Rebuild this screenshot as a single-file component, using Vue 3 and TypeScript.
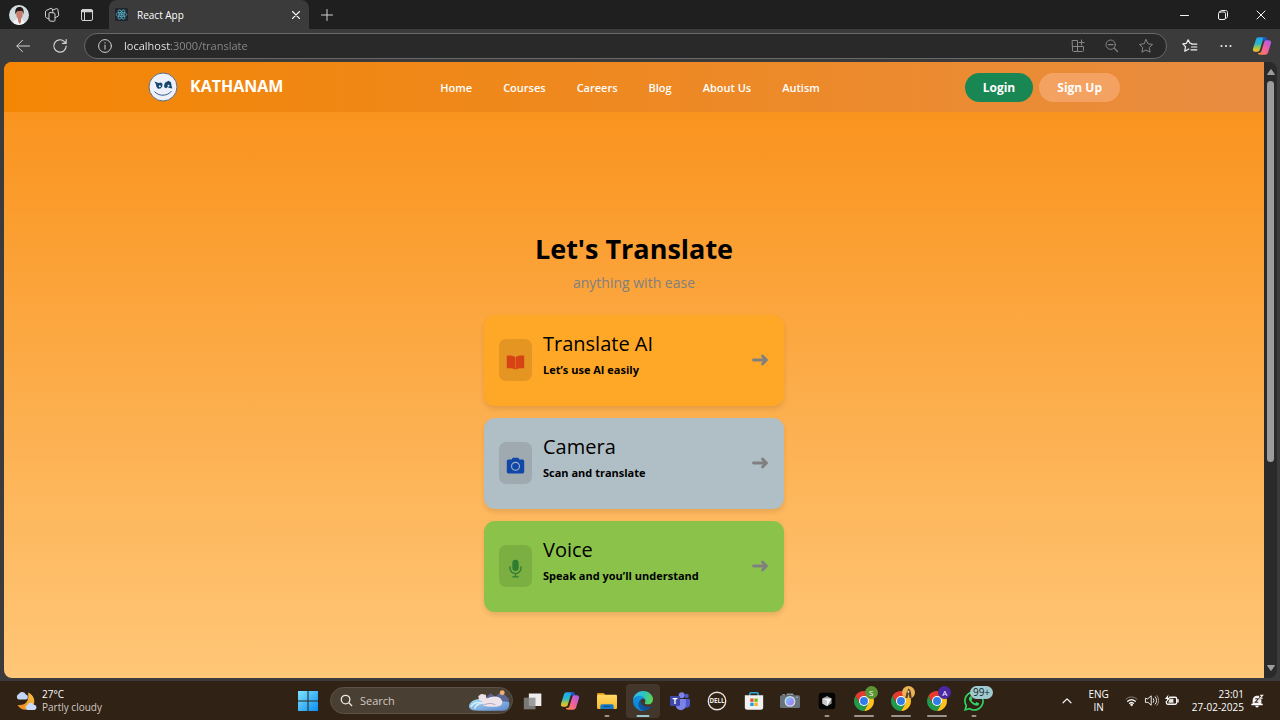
<script setup lang="ts">
import { ref } from 'vue'

interface TranslateOption {
  id: 'ai' | 'camera' | 'voice'
  title: string
  text: string
}

interface TaskApp {
  name: string
  icon: string
  state?: 'open' | 'active' | 'wide'
  badge?: string
  badgeKind?: string
}

const address = ref('localhost:3000/translate')
const taskSearch = ref('')

const links: string[] = ['Home', 'Courses', 'Careers', 'Blog', 'About Us', 'Autism']

const options: TranslateOption[] = [
  { id: 'ai', title: 'Translate AI', text: 'Let’s use AI easily' },
  { id: 'camera', title: 'Camera', text: 'Scan and translate' },
  { id: 'voice', title: 'Voice', text: 'Speak and you’ll understand' },
]

const apps: TaskApp[] = [
  { name: 'Task view', icon: 'taskview' },
  { name: 'Copilot', icon: 'copilot' },
  { name: 'File Explorer', icon: 'explorer', state: 'open' },
  { name: 'Edge', icon: 'edge', state: 'active' },
  { name: 'Teams', icon: 'teams' },
  { name: 'Dell', icon: 'dell' },
  { name: 'Store', icon: 'store' },
  { name: 'Camera', icon: 'photo' },
  { name: 'Cursor', icon: 'cube', state: 'open' },
  { name: 'Chrome S', icon: 'chrome', state: 'wide', badge: 'S', badgeKind: 'green' },
  { name: 'Chrome guest', icon: 'chrome', state: 'wide', badge: '', badgeKind: 'photo' },
  { name: 'Chrome A', icon: 'chrome', state: 'wide', badge: 'A', badgeKind: 'purple' },
  { name: 'WhatsApp', icon: 'whatsapp', state: 'open', badge: '99+', badgeKind: 'count' },
]
</script>

<template>
  <div class="desktop">
    <svg class="defs" width="0" height="0" aria-hidden="true">
      <defs>
        <linearGradient id="cpLeft" x1="0" y1="0" x2="0" y2="1">
          <stop offset="0" stop-color="#1fa5ee" /><stop offset=".45" stop-color="#2bb8c8" />
          <stop offset=".75" stop-color="#b5c73c" /><stop offset="1" stop-color="#f8b830" />
        </linearGradient>
        <linearGradient id="cpRight" x1="1" y1="0" x2="0" y2="1">
          <stop offset="0" stop-color="#a05cf5" /><stop offset=".5" stop-color="#f0609c" />
          <stop offset="1" stop-color="#ff8a3c" />
        </linearGradient>
        <linearGradient id="edgeA" x1=".2" y1="0" x2="1" y2="0">
          <stop offset="0" stop-color="#0c59a4" /><stop offset="1" stop-color="#114a8b" />
        </linearGradient>
        <linearGradient id="edgeB" x1="1" y1="0" x2="0" y2="1">
          <stop offset="0" stop-color="#1b9de2" /><stop offset="1" stop-color="#0680d7" />
        </linearGradient>
        <linearGradient id="edgeC" x1="0" y1=".4" x2="1" y2=".6">
          <stop offset="0" stop-color="#35c1f1" /><stop offset=".45" stop-color="#2cc2c8" />
          <stop offset="1" stop-color="#5fd84a" />
        </linearGradient>
        <linearGradient id="winBlue" x1="0" y1="0" x2="1" y2="1">
          <stop offset="0" stop-color="#7fe4ff" /><stop offset="1" stop-color="#0a8cf0" />
        </linearGradient>
        <linearGradient id="folder" x1="0" y1="0" x2="0" y2="1">
          <stop offset="0" stop-color="#ffd965" /><stop offset="1" stop-color="#f8b92c" />
        </linearGradient>
        <linearGradient id="lens" x1="0" y1="0" x2="1" y2="1">
          <stop offset="0" stop-color="#6fd0ff" /><stop offset="1" stop-color="#b06cf0" />
        </linearGradient>
        <linearGradient id="moon" x1="1" y1="0" x2="0" y2="1">
          <stop offset="0" stop-color="#fbc541" /><stop offset="1" stop-color="#ee8420" />
        </linearGradient>
        <linearGradient id="ice" x1="0" y1="0" x2="1" y2="1">
          <stop offset="0" stop-color="#a9dff5" /><stop offset="1" stop-color="#5d86cf" />
        </linearGradient>
      </defs>
      <symbol id="i-copilot" viewBox="0 0 24 24">
        <path d="M17 3.5c-.4-1.300-1.200-2-2.500-2H8c-1.700 0-2.800 1-3.400 2.900L1.300 15c-.7 2.400.3 4 2.500 4h2.700c1.500 0 2.400-.8 2.900-2.400l3.100-10.400c.5-1.800 1.200-2.700 2.700-2.700z" fill="url(#cpLeft)" />
        <path d="M12.500 1.500h3c1.200 0 1.900.6 2.300 1.900l.8 2.900h-2.500c-1.300 0-2.200-.3-2.600-1.700z" fill="#2252c8" />
        <path d="M7 20.500c.4 1.300 1.200 2 2.500 2H16c1.700 0 2.800-1 3.400-2.900L22.700 9c.7-2.400-.3-4-2.500-4h-2.700c-1.500 0-2.400.8-2.900 2.400l-3.100 10.400c-.5 1.800-1.200 2.700-2.700 2.700z" fill="url(#cpRight)" />
      </symbol>
      <symbol id="i-taskview" viewBox="0 0 24 24">
        <path d="M7 3h15v15H7z" fill="#eeeeee" />
        <path d="M1 8h14v14H1z" fill="#8c8c8c" opacity=".82" />
      </symbol>
      <symbol id="i-explorer" viewBox="0 0 24 24">
        <path d="M0 4A1.500 1.500 0 0 1 1.500 2.500h6.500L10.500 5H0z" fill="#e29a1a" />
        <rect x="0" y="4.500" width="24" height="17" rx="1.500" fill="url(#folder)" />
        <path d="M4 21.500V18a2 2 0 0 1 2-2h12a2 2 0 0 1 2 2v3.500z" fill="#1779c5" />
        <path d="M8 18.500h8" stroke="#0b4f91" stroke-width="1.500" />
      </symbol>
      <symbol id="i-edge" viewBox="0 0 256 256">
        <path fill="url(#edgeA)" d="M231 190.500c-3.400 1.800-6.900 3.400-10.500 4.700a101.900 101.900 0 0 1-35.900 6.400c-47.300 0-88.500-32.500-88.500-74.300 0-11.500 6.400-21.900 16.400-27.300-42.800 1.800-53.800 46.400-53.800 72.500 0 73.900 68.100 81.400 82.800 81.400 7.900 0 19.800-2.300 27-4.600l1.300-.4a128.300 128.300 0 0 0 66.600-52.800 4 4 0 0 0-5.400-5.600z" />
        <path fill="url(#edgeB)" d="M105.700 241.400a79.200 79.200 0 0 1-22.700-21.300 80.700 80.700 0 0 1 29.500-120c3.100-1.500 8.500-4.100 15.600-4a32.400 32.400 0 0 1 25.700 13 31.900 31.900 0 0 1 6.300 18.700c0-.2 24.500-79.600-80-79.600C36.300 48.200 0 90 0 126.600a130.500 130.500 0 0 0 12.100 56 128 128 0 0 0 156.400 67.100 75.600 75.600 0 0 1-62.800-8z" />
        <path fill="url(#edgeC)" d="M152.300 148.900c-.8 1-3.300 2.500-3.300 5.700 0 2.600 1.700 5.100 4.700 7.200 14.400 10 41.500 8.700 41.600 8.700a59.600 59.600 0 0 0 30.300-8.400 61.400 61.400 0 0 0 30.400-52.900c.3-22.400-8-37.300-11.300-43.900C223.500 23.900 177.700 0 128 0 57.900 0 1 56.200 0 126.200c.5-36.500 36.800-66 80-66 3.500 0 23.500.3 42 10a72.600 72.600 0 0 1 30.900 29.300c6.100 10.600 7.200 24.100 7.200 29.500s-2.700 13.300-7.800 19.900z" />
      </symbol>
      <symbol id="i-store" viewBox="0 0 24 24">
        <path d="M7 6V3.200C7 2.500 7.500 2 8.200 2h7.600c.7 0 1.200.5 1.200 1.200V6" fill="none" stroke="#2fa9dc" stroke-width="1.800" />
        <path d="M1 5h22v14.500a3 3 0 0 1-3 3H4a3 3 0 0 1-3-3z" fill="#f1f1f1" />
        <path d="M7.500 9h4v4h-4z" fill="#e8502c" /><path d="M12.500 9h4v4h-4z" fill="#74b816" />
        <path d="M7.500 14h4v4h-4z" fill="#1c9be6" /><path d="M12.500 14h4v4h-4z" fill="#f6b61c" />
      </symbol>
      <symbol id="i-photo" viewBox="0 0 24 24">
        <path d="M7 5l1.500-2h7L17 5z" fill="#8e979e" />
        <rect x="0" y="5" width="24" height="15.500" rx="1.800" fill="#69737b" />
        <path d="M3 4.500h3M19 7.500h2.500" stroke="#aeb8be" stroke-width="1.300" />
        <circle cx="12" cy="12.500" r="6.500" fill="#d4dce2" />
        <circle cx="12" cy="12.500" r="5" fill="url(#lens)" />
      </symbol>
      <symbol id="i-cube" viewBox="0 0 24 24">
        <rect x="2" y="2" width="20" height="20" rx="4" fill="#050505" />
        <path d="M12 6l5.500 3v6L12 18.200 6.500 15V9z" fill="#9b9b9b" />
        <path d="M6.500 9H17.500L12 18.200V12z" fill="#f4f4f4" />
        <path d="M6.500 9L12 12v6.200L6.500 15z" fill="#c9c9c9" />
      </symbol>
      <symbol id="i-chrome" viewBox="2 2 44 44">
        <path fill="#e33b2e" d="M4.950 13A22 22 0 0 1 43.050 13H24L14.500 29.500z" />
        <path fill="#fcc31e" d="M43.050 13A22 22 0 0 1 24 46L33.500 29.500 24 13z" />
        <path fill="#229a4b" d="M24 46A22 22 0 0 1 4.950 13L14.500 29.500H33.500z" />
        <circle cx="24" cy="24" r="11" fill="#fff" /><circle cx="24" cy="24" r="8.700" fill="#2f7de9" />
      </symbol>
      <symbol id="i-whatsapp" viewBox="0 0 16 16">
        <path fill="#2fd565" d="M13.601 2.326A7.850 7.850 0 0 0 7.994 0C3.627 0 .068 3.558.064 7.926c0 1.399.366 2.760 1.057 3.965L0 16l4.204-1.102a7.900 7.900 0 0 0 3.790.965h.004c4.368 0 7.926-3.558 7.930-7.930A7.900 7.900 0 0 0 13.600 2.326zM7.994 14.521a6.600 6.600 0 0 1-3.356-.920l-.240-.144-2.494.654.666-2.433-.156-.251a6.560 6.560 0 0 1-1.007-3.505c0-3.626 2.957-6.584 6.591-6.584a6.560 6.560 0 0 1 4.660 1.931 6.560 6.560 0 0 1 1.928 4.660c-.004 3.639-2.961 6.592-6.592 6.592m3.615-4.934c-.197-.099-1.170-.578-1.353-.646-.182-.065-.315-.099-.445.099-.133.197-.513.646-.627.775-.114.133-.232.148-.430.050-.197-.100-.836-.308-1.592-.985-.590-.525-.985-1.175-1.103-1.372-.114-.198-.011-.304.088-.403.087-.088.197-.232.296-.346.100-.114.133-.198.198-.330.065-.134.034-.248-.015-.347-.050-.099-.445-1.076-.612-1.470-.160-.389-.323-.335-.445-.340-.114-.007-.247-.007-.380-.007a.730.730 0 0 0-.529.247c-.182.198-.691.677-.691 1.654s.710 1.916.810 2.049c.098.133 1.394 2.132 3.383 2.992.470.205.840.326 1.129.418.475.152.904.129 1.246.080.380-.058 1.171-.480 1.338-.943.164-.464.164-.860.114-.994-.050-.133-.182-.198-.380-.297" />
      </symbol>
    </svg>

    <div class="titlebar">
      <button class="icon-btn avatar" aria-label="Profile">
        <svg viewBox="0 0 20 20"><defs><clipPath id="av"><circle cx="10" cy="10" r="10" /></clipPath></defs>
          <g clip-path="url(#av)"><path d="M0 0h20v20H0z" fill="#d3dde0" /><path d="M4 20c0-4 2-5.500 6-6 4 .5 6 2 6 6z" fill="#f2f3f5" /><path d="M9 13h3v4l-1.500 2L9 16z" fill="#c67a69" /><ellipse cx="10.500" cy="9" rx="3.300" ry="4.800" fill="#c97d6c" /><path d="M6.500 9.500c-1-5 .7-7.500 4-7.500s5 2.500 3.800 7.500c-.3-2.500-.9-3.500-2-3.800-1.700.4-3.200.2-4.200.5-.7.700-1.200 1.900-1.600 3.300z" fill="#25191b" /></g>
        </svg>
      </button>
      <button class="icon-btn workspaces" aria-label="Workspaces">
        <svg viewBox="0 0 16 16" class="line"><path d="M8.200 3.200l4.300-1.600c.6-.2 1.100.1 1.300.6l.9 5.800c.1.600-.2 1-.7 1.200l-2.800 1.500M6 5.500L10 6c.6.100 1 .5 1 1v6.300c0 .6-.5 1-1 1L6 14c-.6-.1-1-.5-1-1V6.500c0-.6.400-1 1-1zM4.800 12l-2.500-1.300c-.5-.2-.8-.5-.8-1V4.500c0-.5.300-.8.700-1L7 1.300c.6-.2 1 .1 1.200.6L9 5.500" /></svg>
      </button>
      <button class="icon-btn tabs-menu" aria-label="Tab actions">
        <svg viewBox="0 0 16 16" class="line"><rect x="2.500" y="2.500" width="11" height="11" rx="1.500" /><path d="M3 4h10" stroke-width="2.400" /><path d="M5.500 5v8.500" /></svg>
      </button>
      <div class="tab">
        <svg class="react" viewBox="0 0 16 16"><rect width="16" height="16" rx="1.500" fill="#20262c" /><g fill="none" stroke="#5bb9d3" stroke-width=".9"><ellipse cx="8" cy="8" rx="6.500" ry="2.500" /><ellipse cx="8" cy="8" rx="6.500" ry="2.500" transform="rotate(60 8 8)" /><ellipse cx="8" cy="8" rx="6.500" ry="2.500" transform="rotate(120 8 8)" /></g><circle cx="8" cy="8" r="1.400" fill="#5bb9d3" /></svg>
        <span class="tab-title">React App</span>
        <button class="icon-btn tab-close" aria-label="Close tab"><svg viewBox="0 0 16 16" class="line bright"><path d="M4 4l8 8M12 4l-8 8" stroke-width="1.300" /></svg></button>
      </div>
      <button class="icon-btn new-tab" aria-label="New tab"><svg viewBox="0 0 16 16" class="line"><path d="M8 2.500v11M2.500 8h11" /></svg></button>
      <div class="window-controls">
        <button class="icon-btn" aria-label="Minimize"><svg viewBox="0 0 16 16" class="line bright"><path d="M3.500 8.500h8" /></svg></button>
        <button class="icon-btn" aria-label="Restore"><svg viewBox="0 0 16 16" class="line bright"><rect x="3.500" y="5" width="7" height="7.500" rx="1.500" /><path d="M5 4.500c.2-.7.700-1 1.500-1h4c1.300 0 2 .8 2 2V9.500c0 .8-.3 1.300-1 1.500" /></svg></button>
        <button class="icon-btn" aria-label="Close window"><svg viewBox="0 0 16 16" class="line bright"><path d="M4 4l8 8M12 4l-8 8" /></svg></button>
      </div>
    </div>

    <div class="toolbar">
      <button class="icon-btn" aria-label="Back"><svg viewBox="0 0 16 16" class="line"><path d="M14.500 8H2M7.500 2.300L1.800 8l5.700 5.700" /></svg></button>
      <button class="icon-btn reload" aria-label="Reload"><svg viewBox="0 0 16 16" class="line"><path d="M14.200 8a6.200 6.200 0 1 1-1.800-4.400L14 5.200M14.200 1.500v3.800h-3.800" stroke-width="1.200" /></svg></button>
      <div class="address">
        <button class="icon-btn info" aria-label="Site information"><svg viewBox="0 0 16 16" class="line"><circle cx="8" cy="8" r="6.400" /><path d="M8 7v4.200M8 4.600v.4" /></svg></button>
        <input v-model="address" class="url" type="text" aria-label="Address" spellcheck="false" />
        <button class="icon-btn dim" aria-label="Apps"><svg viewBox="0 0 16 16" class="line"><path d="M2.500 2.500h5v11H3.500a1 1 0 0 1-1-1zM2.500 8.500h11v4a1 1 0 0 1-1 1h-5M11.500 2v5M9 4.500h5" /></svg></button>
        <button class="icon-btn dim" aria-label="Zoom"><svg viewBox="0 0 16 16" class="line"><circle cx="6.700" cy="6.700" r="4.700" /><path d="M10.200 10.200L13.500 13.500M4.500 6.700H9" stroke-width="1.200" /></svg></button>
        <button class="icon-btn dim" aria-label="Add to favorites"><svg viewBox="0 0 16 16" class="line"><path d="M8 1.600l2 4.200 4.600.6-3.400 3.200.9 4.600L8 12l-4.100 2.200.9-4.600L1.400 6.400 6 5.800z" /></svg></button>
      </div>
      <button class="icon-btn" aria-label="Favorites"><svg viewBox="0 0 16 16" class="line bright"><path d="M9.800 5.500L7.900 5.200 6.200 1.800 4.400 5.300.8 5.900l2.700 2.700-.7 4.600 4-2.200M9.800 6.200h5M9.500 9h5.300M9 11.800h5.800" stroke-width="1.200" /></svg></button>
      <button class="icon-btn more" aria-label="Settings and more"><svg viewBox="0 0 16 16"><g fill="#e8e8e8"><circle cx="3.500" cy="8" r="1.100" /><circle cx="8" cy="8" r="1.100" /><circle cx="12.500" cy="8" r="1.100" /></g></svg></button>
      <button class="icon-btn copilot" aria-label="Copilot"><svg><use href="#i-copilot" /></svg></button>
    </div>

    <div class="viewport">
      <div class="page">
        <header class="site-header">
          <div class="header-inner">
            <a class="brand" href="#home">
              <svg viewBox="0 0 30 30">
                <circle cx="15" cy="15" r="14" fill="#eef0fa" stroke="#5b6f88" stroke-width="1" />
                <path d="M6.500 9.500l4 1.500 2.500-.5 1.500 1.500-.3 2.500-1.700 2-2.600.3-1.600-2.300-.3-2z" fill="#17486f" />
                <path d="M16 13.500l1-2.700 3.500-2 2.500 1.500.7 4.200.8 2-3-.5-2-1-1.300 1.200-1.700-.7z" fill="#17486f" />
                <circle cx="11.800" cy="14.200" r="1" fill="#eef0fa" /><circle cx="20.500" cy="13.700" r="1" fill="#eef0fa" />
                <path d="M6.500 19.500c4 5 13 5 17-.5" fill="none" stroke="#345d88" stroke-width="1" />
              </svg>
              <span>KATHANAM</span>
            </a>
            <nav class="nav" aria-label="Main">
              <a v-for="link in links" :key="link" :href="'#' + link.toLowerCase().replace(' ', '-')">{{ link }}</a>
            </nav>
            <div class="auth">
              <button class="login" type="button">Login</button>
              <button class="signup" type="button">Sign Up</button>
            </div>
          </div>
        </header>

        <main class="content">
          <h1>Let's Translate</h1>
          <p class="lead">anything with ease</p>
          <div class="cards">
            <button v-for="option in options" :key="option.id" type="button" class="card" :class="option.id">
              <span class="card-icon">
                <svg v-if="option.id === 'ai'" viewBox="0 0 24 24"><path fill="#d84315" d="M1 3.500c3.500-.6 7.500 0 10.700 1.500v16C8.500 19.500 4.500 19 1 19.600zM23 3.500c-3.500-.6-7.500 0-10.700 1.500v16c3.200-1.500 7.200-2 10.700-1.400z" /></svg>
                <svg v-else-if="option.id === 'camera'" viewBox="0 0 24 24"><path fill="#1147a8" d="M3 4.500h4L8.500 2.200h7L17 4.500h4a2 2 0 0 1 2 2V20a2 2 0 0 1-2 2H3a2 2 0 0 1-2-2V6.500a2 2 0 0 1 2-2z" /><circle cx="12" cy="13" r="5" fill="none" stroke="#a2b3c0" stroke-width="1.400" /></svg>
                <svg v-else viewBox="0 0 24 24"><rect x="8" y="1" width="8" height="14" rx="4" fill="#2e7d32" /><path d="M5 9v2.500a7 7 0 0 0 14 0V9M12 18.500V22M8 22.500h8" fill="none" stroke="#2e7d32" stroke-width="1.700" /></svg>
              </span>
              <span class="card-text">
                <span class="card-title">{{ option.title }}</span>
                <span class="card-note">{{ option.text }}</span>
              </span>
              <svg class="arrow" viewBox="0 0 18 18"><path d="M2.500 9H15M11.500 5L15.500 9 11.500 13" fill="none" stroke="#808080" stroke-width="2.800" stroke-linecap="round" stroke-linejoin="round" /></svg>
            </button>
          </div>
        </main>
      </div>
      <div class="scrollbar" aria-hidden="true">
        <svg viewBox="0 0 10 8"><path d="M5 1.500l3.500 5h-7z" stroke-linejoin="round" stroke-width="1" stroke="#9c9c9c" fill="#9c9c9c" /></svg>
        <div class="track"><div class="thumb"></div></div>
        <svg viewBox="0 0 10 8"><path d="M5 6.500l3.500-5h-7z" stroke-linejoin="round" stroke-width="1" stroke="#9c9c9c" fill="#9c9c9c" /></svg>
      </div>
    </div>

    <footer class="taskbar">
      <button class="weather" type="button">
        <svg viewBox="0 0 22 22"><path d="M13 2.500c7 3 8.500 11 3 15.500-4.500 3-11 2-13.500-3 5 .5 8.500-1 10-4.500 1-3 1-5 .5-8z" fill="url(#moon)" /><path d="M3.500 9.500a3 3 0 0 1 .3-5.500 3.800 3.800 0 0 1 7 .6 2.500 2.500 0 0 1 .2 4.900z" fill="#c4d6f8" /><path d="M12.500 20a2.600 2.600 0 0 1 0-5 3.500 3.500 0 0 1 6.300-.3A2.700 2.700 0 0 1 19.500 20z" fill="#cadafa" /></svg>
        <span class="weather-text"><span>27°C</span><span class="muted">Partly cloudy</span></span>
      </button>

      <div class="task-center">
        <button class="start" aria-label="Start"><svg viewBox="0 0 20 20"><path fill="url(#winBlue)" d="M0 0h9.500v9.500H0zM10.500 0H20v9.500h-9.500zM0 10.500h9.500V20H0zM10.500 10.500H20V20h-9.500z" /></svg></button>
        <label class="task-search">
          <svg class="glass" viewBox="0 0 14 14"><circle cx="6" cy="6" r="4.600" /><path d="M9.500 9.500L13 13" /></svg>
          <input v-model="taskSearch" type="text" placeholder="Search" aria-label="Search" />
          <svg class="bear" viewBox="0 0 44 24"><path d="M17 10l6-6 5 4 6-6 8 8-2 11H14z" fill="#5c6795" /><circle cx="35" cy="3.500" r="2.500" fill="#f0b070" /><path d="M12 10C5 10 1 14 1 18c1 4 6 4 12 4h22c6 0 8-4 7-9z" fill="url(#ice)" /><path d="M3 18c2-4 7-5 12-4-6 1-8 4-8 6" fill="none" stroke="#d5f0fb" stroke-width="1.500" /><path d="M11 9c-1-1.600-.3-3 1-3 1-1.500 3.500-1.500 4.500-.5 1.500-.8 2.500.5 1.800 1.800.7.800.7 1.500.7 2.200 5-2 9-3 13-1 3 2 4 5 2 7.500-3 2.500-10 2-14 1.500-3 0-5-1-5-3-1-1-.5-2-1-2.500-1 0-2-.5-3-1.500z" fill="#ece2e8" /><path d="M16 16c5-2 9-2 12 0" stroke="#b6a3bd" fill="none" /></svg>
        </label>
        <div class="apps">
          <button v-for="app in apps" :key="app.name" class="app" :class="app.state" :aria-label="app.name">
            <svg v-if="app.icon === 'teams'" class="app-icon" viewBox="0 0 24 24">
              <circle cx="20" cy="6" r="2.600" fill="#5059c9" />
              <circle cx="14" cy="5" r="3.600" fill="#7b83eb" />
              <path d="M17 9.500h6c.6 0 1 .4 1 1V16a4 4 0 0 1-6 3.500z" fill="#5059c9" />
              <path d="M8 9.500h10c.6 0 1 .4 1 1V17a6 6 0 0 1-12 0v-6.500z" fill="#7b83eb" />
              <rect x="0" y="6" width="12" height="12" rx="1.200" fill="#4048a8" />
              <text x="6" y="15.500" text-anchor="middle" font-weight="700" font-size="10" fill="#fff">T</text>
            </svg>
            <svg v-else-if="app.icon === 'dell'" class="app-icon" viewBox="0 0 24 24">
              <circle cx="12" cy="12" r="10.500" fill="none" stroke="#e8e4e0" stroke-width="1.600" />
              <text x="12" y="14.700" text-anchor="middle" font-weight="700" font-size="7.500" fill="#f0ece8">DELL</text>
            </svg>
            <svg v-else class="app-icon"><use :href="'#i-' + app.icon" /></svg>
            <span v-if="app.badgeKind" class="badge" :class="app.badgeKind">
              <svg v-if="app.badgeKind === 'photo'" viewBox="0 0 12 12"><circle cx="6" cy="6" r="6" fill="#eab354" /><path d="M3 11l1.500-6L6 2l2 2.500L9 11H7L6 7l-1 4z" fill="#59402a" /><path d="M5 4l2 1-1.500 2z" fill="#f5e6c6" /></svg>
              <template v-else>{{ app.badge }}</template>
            </span>
          </button>
        </div>
      </div>

      <div class="tray">
        <button class="tray-btn" aria-label="Hidden icons"><svg viewBox="0 0 16 16" class="line bright"><path d="M3.500 10L8 5.500l4.500 4.500" stroke-width="1.400" /></svg></button>
        <button class="lang" type="button"><span>ENG</span><span>IN</span></button>
        <button class="status" aria-label="Network, sound and battery">
          <svg viewBox="0 0 16 16" class="line bright"><path d="M2 6.500a8.500 8.500 0 0 1 12 0" stroke="#8a817b" /><path d="M4 8.800a5.700 5.700 0 0 1 8 0M6 11a2.900 2.900 0 0 1 4 0" stroke-width="1.500" /><circle cx="8" cy="12.600" r=".9" fill="#fff" /></svg>
          <svg viewBox="0 0 16 16" class="line bright"><path d="M1.500 6v4h2.700l3.500 3V3L4.200 6zM10 6a3.500 3.500 0 0 1 0 4M12 4.200a6 6 0 0 1 0 7.600" /><path d="M13.800 2.800a8 8 0 0 1 0 10.400" stroke="#a8a09a" /></svg>
          <svg viewBox="0 0 16 16" class="line bright"><path d="M6 4.500h6a1.500 1.500 0 0 1 1.500 1.500v4.500A1.500 1.500 0 0 1 12 12H4a1.500 1.500 0 0 1-1.500-1.500V9M15 7v2.500" stroke-width="1.400" /><path d="M6 6h4v4.500H4.500z" fill="#e9e4df" stroke="none" /><path d="M4.800 1.500L1 6.500h2.500L2.500 10l4-5H4z" fill="#fff" stroke="none" /></svg>
        </button>
        <button class="clock" type="button"><span>23:01</span><span>27-02-2025</span></button>
        <button class="tray-btn" aria-label="Notifications"><svg viewBox="0 0 16 16"><path d="M3 11.500V7a5 5 0 0 1 5-5h5v9.500z" fill="#f2efec" /><path d="M1.500 11h13v1.800h-13zM6 13.500h4a2 2 0 0 1-4 0z" fill="#fff" /><path d="M6 5.500h3.500l-3.500 4h3.500" fill="none" stroke="#3b332b" stroke-width="1.200" /><path d="M10.500.5h5v5.500h-5z" fill="#302215" /><path d="M11.500 1.500h3l-3 3.300h3" fill="none" stroke="#fff" stroke-width="1.200" /></svg></button>
      </div>
    </footer>
  </div>
</template>

<style>
body {
  margin: 0;
  background: #3b3b3b;
}
</style>

<style scoped>
.desktop {
  display: flex;
  flex-direction: column;
  min-height: 100vh;
  background: #3b3b3b;
  color: #fff;
  font-family: "Open Sans", "Noto Sans", sans-serif;
}
.defs {
  position: absolute;
}
button {
  font: inherit;
  color: inherit;
  border: 0;
  padding: 0;
  background: none;
  cursor: pointer;
}
a {
  color: inherit;
  text-decoration: none;
}
svg {
  display: block;
  flex: none;
}
.line {
  fill: none;
  stroke: #d2d2d2;
  stroke-width: 1;
  stroke-linecap: round;
  stroke-linejoin: round;
}
.line.bright {
  stroke: #f4f4f4;
}
.icon-btn {
  display: flex;
  flex: none;
  width: 16px;
  height: 16px;
}
.icon-btn svg {
  width: 100%;
  height: 100%;
}

.titlebar {
  display: flex;
  align-items: center;
  height: 29px;
  padding-left: 9px;
  background: #1f1f1f;
}
.avatar {
  width: 20px;
  height: 20px;
}
.workspaces {
  margin-left: 15px;
}
.tabs-menu {
  margin-left: 19px;
}
.tab {
  display: flex;
  align-items: center;
  align-self: stretch;
  width: 188px;
  margin-left: 14px;
  padding: 0 6px;
  border-radius: 8px 8px 0 0;
  background: #3b3b3b;
}
.react {
  width: 13px;
  height: 13px;
}
.tab-title {
  flex: 1;
  margin-left: 9px;
  font-size: 10px;
}
.new-tab {
  margin-left: 10px;
}
.tab-close {
  width: 14px;
  height: 14px;
}
.window-controls {
  display: flex;
  gap: 22px;
  margin-left: auto;
  padding-right: 11px;
}

.toolbar {
  display: flex;
  align-items: center;
  gap: 20px;
  height: 33px;
  padding: 0 8px 0 15px;
}
.reload {
  margin-left: 1px;
}
.address {
  display: flex;
  align-items: center;
  flex: 1;
  gap: 18px;
  height: 26px;
  box-sizing: border-box;
  margin: 0 -5px 0 -4px;
  padding: 0 12px;
  border: 1px solid #686868;
  border-radius: 13px;
  background: #292929;
}
.url {
  flex: 1;
  min-width: 0;
  margin-left: -7px;
  padding: 0;
  border: 0;
  outline: 0;
  background: linear-gradient(to right, #f2f2f2 47px, #8d8d8d 47px);
  -webkit-background-clip: text;
  background-clip: text;
  color: transparent;
  font: 11px/18px "Open Sans", "Noto Sans", sans-serif;
}
.dim .line {
  stroke: #868686;
}
.copilot {
  width: 20px;
  height: 20px;
  margin-left: -2px;
}

.viewport {
  display: flex;
  flex: 1;
  margin: 0 3px 3px 4px;
}
.page {
  display: flex;
  flex: 1;
  flex-direction: column;
  overflow: hidden;
  border-radius: 8px 0 0 8px;
  background: linear-gradient(#f98f16, #ffc778);
}
.site-header {
  background: linear-gradient(to right, #f48604, #e88c40);
}
.header-inner {
  display: flex;
  align-items: center;
  justify-content: space-between;
  max-width: 972px;
  height: 50px;
  margin: 0 auto;
}
.brand {
  display: flex;
  align-items: center;
  gap: 12px;
  font-size: 16px;
  font-weight: 700;
}
.brand span {
  padding-bottom: 2px;
}
.brand svg {
  width: 30px;
  height: 30px;
}
.nav {
  display: flex;
  gap: 31px;
  padding-left: 12px;
  font-size: 11px;
  font-weight: 600;
}
.auth {
  display: flex;
  gap: 6px;
  font-size: 12px;
  font-weight: 700;
}
.auth button {
  height: 29px;
  padding: 0 18px;
  border-radius: 15px;
}
.auth .login {
  background: #198754;
}
.auth .signup {
  background: #f4a261;
}
.content {
  display: flex;
  flex: 1;
  flex-direction: column;
  align-items: center;
  justify-content: center;
  padding: 100px 0 50px;
  color: #000;
}
h1 {
  margin: 0;
  font-size: 27px;
  line-height: 40px;
  font-weight: 700;
}
.lead {
  margin: 3px 0 21px;
  color: #808080;
  font-size: 14px;
  line-height: 22px;
}
.cards {
  display: flex;
  flex-direction: column;
  gap: 12px;
}
.card {
  display: flex;
  align-items: center;
  box-sizing: border-box;
  width: 300px;
  height: 91px;
  padding: 0 15px;
  border-radius: 11px;
  box-shadow: 0 3px 5px rgba(0, 0, 0, 0.1);
  color: #000;
  text-align: left;
}
.card.ai {
  background: #ffa726;
}
.card.camera {
  background: #b0bec5;
}
.card.voice {
  background: #8bc34a;
}
.card-icon {
  display: flex;
  align-items: center;
  justify-content: center;
  width: 33px;
  height: 42px;
  box-sizing: border-box;
  padding-top: 5px;
  border-radius: 7px;
  background: rgba(0, 0, 0, 0.1);
}
.card-icon svg {
  width: 19px;
  height: 19px;
}
.card-text {
  display: flex;
  flex: 1;
  flex-direction: column;
  margin-left: 11px;
  padding-bottom: 8px;
}
.card-title {
  font-size: 20px;
  line-height: 28px;
  font-weight: 500;
}
.card-note {
  font-size: 11px;
  line-height: 24px;
  font-weight: 700;
}
.arrow {
  width: 18px;
  height: 18px;
}
.scrollbar {
  display: flex;
  flex-direction: column;
  align-items: center;
  gap: 5px;
  width: 13px;
  box-sizing: border-box;
  padding: 6px 0;
  border-radius: 0 8px 8px 0;
  background: #2a2a2a;
}
.scrollbar svg {
  width: 10px;
  height: 8px;
}
.track {
  flex: 1;
  width: 7px;
}
.thumb {
  height: 66%;
  border-radius: 4px;
  background: #9c9c9c;
}

.taskbar {
  display: grid;
  grid-template-columns: 1fr auto 1fr;
  align-items: center;
  height: 39px;
  padding: 0 6px 0 15px;
  background: #302215;
  font-size: 10px;
  line-height: 13px;
}
.weather {
  display: flex;
  align-items: center;
  gap: 5px;
  text-align: left;
}
.weather svg {
  width: 22px;
  height: 22px;
}
.weather-text,
.lang,
.clock {
  display: flex;
  flex-direction: column;
}
.muted {
  color: #d0c9c2;
}
.task-center {
  display: flex;
  align-items: center;
}
.start {
  width: 20px;
  height: 20px;
  margin-right: 12px;
}
.task-search {
  display: flex;
  align-items: center;
  box-sizing: border-box;
  width: 183px;
  height: 27px;
  padding: 0 1px 0 9px;
  border: 1px solid #5b5145;
  border-radius: 14px;
  background: #4a3f33;
}
.glass {
  width: 13px;
  height: 13px;
  fill: none;
  stroke: #ece7e2;
  stroke-width: 1.4;
}
.task-search input {
  flex: 1;
  min-width: 0;
  margin-left: 7px;
  padding: 0;
  border: 0;
  outline: 0;
  background: none;
  color: #fff;
  font: 11px/18px "Open Sans", "Noto Sans", sans-serif;
}
.task-search input::placeholder {
  color: #d0c9c2;
  opacity: 1;
}
.bear {
  width: 43px;
  height: 24px;
}
.apps {
  display: flex;
  justify-content: space-between;
  width: 475px;
  margin-left: 3px;
}
.app {
  position: relative;
  display: flex;
  align-items: center;
  justify-content: center;
  width: 34px;
  height: 34px;
  border-radius: 4px;
}
.app.active {
  background: #43372c;
}
.app-icon {
  width: 20px;
  height: 20px;
}
.app::after {
  position: absolute;
  bottom: 1px;
  left: 50%;
  height: 2px;
  border-radius: 1px;
  transform: translateX(-50%);
  background: #9c948c;
  content: "";
}
.app.open::after {
  width: 5px;
}
.app.active::after {
  width: 13px;
  background: #9cc8d0;
}
.app.wide::after {
  width: 20px;
}
.badge {
  position: absolute;
  top: 2px;
  right: 3px;
  display: flex;
  align-items: center;
  justify-content: center;
  width: 13px;
  height: 13px;
  border-radius: 7px;
  font-size: 8px;
}
.badge svg {
  width: 13px;
  height: 13px;
}
.badge.green {
  background: #5c9434;
}
.badge.purple {
  background: #4a28a4;
}
.badge.count {
  right: -2px;
  width: 23px;
  background: #9fcbd0;
  color: #14262a;
  font-size: 10px;
}
.tray {
  display: flex;
  align-items: center;
  justify-content: flex-end;
  margin-right: 10px;
}
.tray-btn {
  width: 14px;
  height: 14px;
}
.lang {
  align-items: center;
  margin: 0 15px 0 14px;
}
.status {
  display: flex;
  gap: 5px;
}
.status svg {
  width: 15px;
  height: 15px;
}
.clock {
  align-items: flex-end;
  margin: 0 6px 0 13px;
}
</style>
